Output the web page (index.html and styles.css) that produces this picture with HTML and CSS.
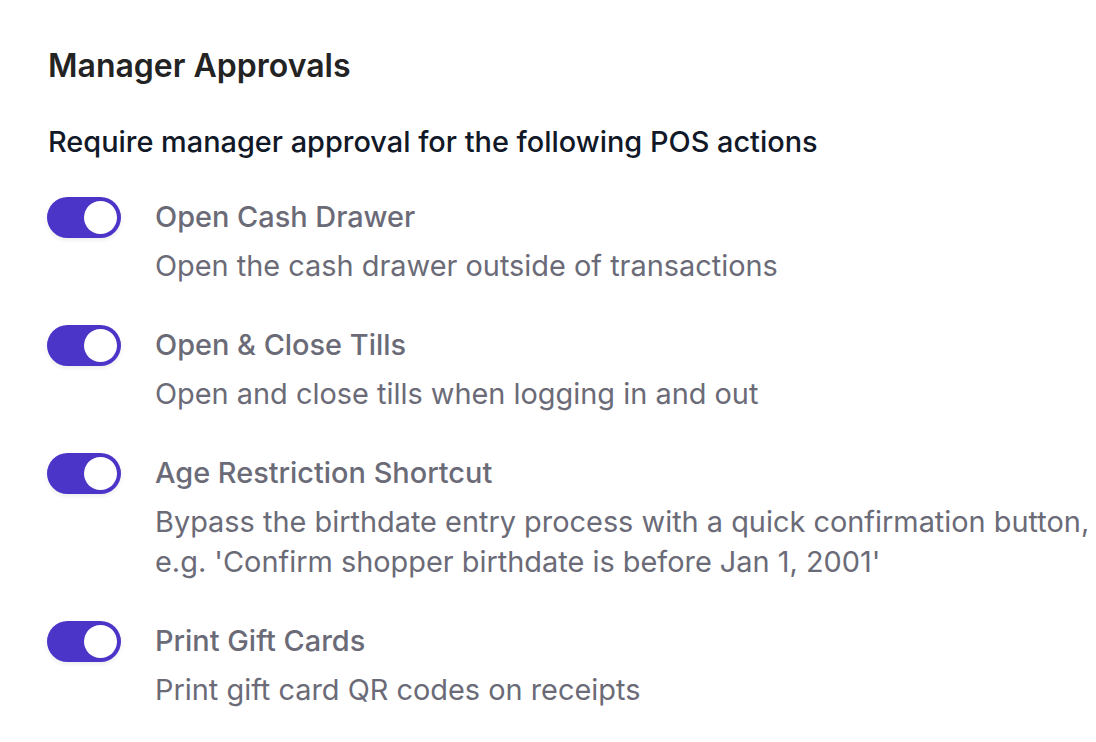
FILE: index.html
```html
<!DOCTYPE html>
<html lang="en">
<head>
<meta charset="utf-8">
<title>Manager Approvals</title>
<link rel="stylesheet" href="styles.css">
</head>
<body>
<section class="panel">
  <h2 class="heading">Manager Approvals</h2>
  <p class="subheading">Require manager approval for the following POS actions</p>
  <ul class="list">
    <li class="row">
      <span class="toggle"><span class="knob"></span></span>
      <div class="text">
        <div class="title">Open Cash Drawer</div>
        <div class="desc">Open the cash drawer outside of transactions</div>
      </div>
    </li>
    <li class="row">
      <span class="toggle"><span class="knob"></span></span>
      <div class="text">
        <div class="title">Open &amp; Close Tills</div>
        <div class="desc">Open and close tills when logging in and out</div>
      </div>
    </li>
    <li class="row">
      <span class="toggle"><span class="knob"></span></span>
      <div class="text">
        <div class="title">Age Restriction Shortcut</div>
        <div class="desc">Bypass the birthdate entry process with a quick confirmation button, e.g. 'Confirm shopper birthdate is before Jan 1, 2001'</div>
      </div>
    </li>
    <li class="row">
      <span class="toggle"><span class="knob"></span></span>
      <div class="text">
        <div class="title">Print Gift Cards</div>
        <div class="desc">Print gift card QR codes on receipts</div>
      </div>
    </li>
  </ul>
</section>
</body>
</html>
```

FILE: styles.css
```css
* { box-sizing: border-box; }
html, body { margin: 0; padding: 0; background: #ffffff; }
body {
  font-family: Inter, "Noto Sans", sans-serif;
  -webkit-font-smoothing: antialiased;
}
.panel {
  padding: 46px 0 0 48px;
  width: 1096px;
}
.heading {
  margin: 0;
  font-size: 32px;
  line-height: 40px;
  font-weight: 600;
  color: #232323;
}
.subheading {
  margin: 36px 0 0;
  font-size: 28.9px;
  line-height: 40px;
  font-weight: 500;
  color: #111827;
}
.list {
  list-style: none;
  margin: 35px 0 0;
  padding: 0;
  display: flex;
  flex-direction: column;
  gap: 39px;
}
.row {
  display: flex;
  align-items: flex-start;
  gap: 34px;
}
.toggle {
  flex: none;
  width: 74px;
  height: 41px;
  margin-left: -1px;
  border-radius: 21px;
  background: #4b34c8;
  display: flex;
  align-items: center;
  justify-content: flex-end;
  padding: 0 4px;
  box-shadow: 0 2px 4px rgba(0,0,0,0.08);
}
.knob {
  width: 33px;
  height: 33px;
  border-radius: 50%;
  background: #ffffff;
}
.text {
  flex: 1;
  min-width: 0;
}
.title {
  font-size: 28.9px;
  line-height: 40px;
  font-weight: 500;
  color: #6b6b78;
}
.desc {
  margin-top: 9px;
  font-size: 28.9px;
  line-height: 40px;
  font-weight: 400;
  color: #6b6b78;
}
```
